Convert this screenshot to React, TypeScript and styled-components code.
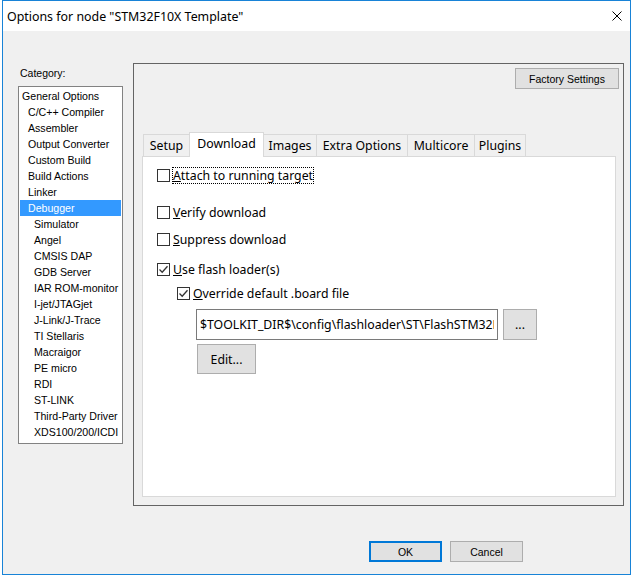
import React from "react";
import styled, { createGlobalStyle } from "styled-components";

const BIG = `"Noto Sans", "Liberation Sans", sans-serif`;
const SMALL = `"Liberation Sans", Arial, sans-serif`;

const GlobalStyle = createGlobalStyle`
  html, body {
    margin: 0;
    padding: 0;
    background: #ffffff;
  }
  body {
    width: 634px;
    height: 577px;
    overflow: hidden;
  }
`;

const Window = styled.div`
  margin-left: 2px;
  width: 629px;
  height: 575px;
  box-sizing: border-box;
  border: 1px solid #1883d7;
  background: #f0f0f0;
  display: flex;
  flex-direction: column;
  color: #000;
`;

const TitleBar = styled.div`
  flex: none;
  height: 30px;
  background: #ffffff;
  display: flex;
  align-items: center;
  padding: 0 8px 0 4px;
  font-family: ${BIG};
  font-size: 12.4px;
`;

const TitleText = styled.div`
  flex: 1;
  white-space: nowrap;
`;

const CloseIcon = styled.svg`
  width: 10px;
  height: 10px;
  display: block;
`;

const Body = styled.div`
  display: flex;
  gap: 10px;
  padding: 32px 6px 0 15px;
`;

const LeftColumn = styled.div`
  width: 105px;
  display: flex;
  flex-direction: column;
`;

const CategoryLabel = styled.div`
  height: 23px;
  box-sizing: border-box;
  padding: 4px 0 0 2px;
  font-family: ${SMALL};
  font-size: 10.5px;
  line-height: 13px;
`;

const TreeList = styled.div`
  height: 358px;
  box-sizing: border-box;
  border: 1px solid #828282;
  background: #ffffff;
  padding-top: 1px;
`;

const TreeRow = styled.div<{ $level: number; $selected?: boolean }>`
  height: 16px;
  line-height: 16px;
  margin: 0 1px;
  padding-left: ${(p) => 2 + p.$level * 6}px;
  font-family: ${SMALL};
  font-size: 10.6px;
  white-space: nowrap;
  background: ${(p) => (p.$selected ? "#3399ff" : "transparent")};
  color: ${(p) => (p.$selected ? "#ffffff" : "#000000")};
`;

const GroupBox = styled.div`
  width: 491px;
  height: 443px;
  box-sizing: border-box;
  border: 1px solid #646464;
  display: flex;
  flex-direction: column;
`;

const Button = styled.div<{ $w: number; $h: number; $small?: boolean; $default?: boolean }>`
  width: ${(p) => p.$w}px;
  height: ${(p) => p.$h}px;
  box-sizing: border-box;
  background: #e1e1e1;
  border: ${(p) => (p.$default ? "2px solid #0078d7" : "1px solid #adadad")};
  display: flex;
  align-items: center;
  justify-content: center;
  font-family: ${(p) => (p.$small ? SMALL : BIG)};
  font-size: ${(p) => (p.$small ? "10.5px" : "12.3px")};
  white-space: nowrap;
  flex: none;
`;

const FactoryButton = styled(Button)`
  align-self: flex-end;
  margin: 4px 4px 0 0;
`;

const TabStrip = styled.div`
  display: flex;
  align-items: flex-end;
  height: 24px;
  margin: 43px 0 0 8px;
  padding-left: 1px;
`;

const Tab = styled.div<{ $w: number; $active?: boolean }>`
  position: relative;
  width: ${(p) => p.$w}px;
  height: ${(p) => (p.$active ? 25 : 22)}px;
  box-sizing: border-box;
  margin-bottom: ${(p) => (p.$active ? -1 : 0)}px;
  padding-bottom: ${(p) => (p.$active ? 3 : 0)}px;
  z-index: ${(p) => (p.$active ? 1 : 0)};
  border: 1px solid #d9d9d9;
  border-bottom: none;
  background: ${(p) => (p.$active ? "#ffffff" : "#f0f0f0")};
  display: flex;
  align-items: center;
  justify-content: center;
  font-family: ${BIG};
  font-size: 12.3px;
  white-space: nowrap;

  & + & {
    margin-left: -1px;
  }
`;

const TabPanel = styled.div`
  flex: 1;
  margin: 0 7px 8px 8px;
  box-sizing: border-box;
  border: 1px solid #d9d9d9;
  background: #ffffff;
  padding: 10px 0 0 14px;
  display: flex;
  flex-direction: column;
  align-items: flex-start;
`;

const CheckRow = styled.div<{ $top: number; $indent?: number }>`
  display: flex;
  align-items: center;
  height: 17px;
  margin-top: ${(p) => p.$top}px;
  margin-left: ${(p) => p.$indent || 0}px;
`;

const Box = styled.span`
  width: 13px;
  height: 13px;
  box-sizing: border-box;
  border: 1px solid #333333;
  background: #ffffff;
  display: flex;
  align-items: center;
  justify-content: center;
`;

const CheckLabel = styled.span<{ $focused?: boolean }>`
  margin-left: 2px;
  border: 1px dotted ${(p) => (p.$focused ? "#000000" : "transparent")};
  font-family: ${BIG};
  font-size: 12.3px;
  line-height: 15px;
  white-space: nowrap;

  u {
    text-underline-offset: 1px;
  }
`;

const PathRow = styled.div`
  display: flex;
  gap: 5px;
  margin: 7px 0 0 39px;
`;

const PathInput = styled.input`
  width: 302px;
  height: 31px;
  box-sizing: border-box;
  border: 1px solid #7a7a7a;
  padding: 0 3px;
  margin: 0;
  background: #ffffff;
  font-family: ${BIG};
  font-size: 12.3px;
  color: #000;
  outline: none;
`;

const EditButton = styled(Button)`
  margin: 4px 0 0 40px;
`;

const Footer = styled.div`
  display: flex;
  justify-content: flex-end;
  gap: 8px;
  margin-top: 35px;
  padding-right: 107px;
`;

const tree: { label: string; level: number; selected?: boolean }[] = [
  { label: "General Options", level: 0 },
  { label: "C/C++ Compiler", level: 1 },
  { label: "Assembler", level: 1 },
  { label: "Output Converter", level: 1 },
  { label: "Custom Build", level: 1 },
  { label: "Build Actions", level: 1 },
  { label: "Linker", level: 1 },
  { label: "Debugger", level: 1, selected: true },
  { label: "Simulator", level: 2 },
  { label: "Angel", level: 2 },
  { label: "CMSIS DAP", level: 2 },
  { label: "GDB Server", level: 2 },
  { label: "IAR ROM-monitor", level: 2 },
  { label: "I-jet/JTAGjet", level: 2 },
  { label: "J-Link/J-Trace", level: 2 },
  { label: "TI Stellaris", level: 2 },
  { label: "Macraigor", level: 2 },
  { label: "PE micro", level: 2 },
  { label: "RDI", level: 2 },
  { label: "ST-LINK", level: 2 },
  { label: "Third-Party Driver", level: 2 },
  { label: "XDS100/200/ICDI", level: 2 },
];

const tabs = [
  { label: "Setup", w: 47 },
  { label: "Download", w: 75, active: true },
  { label: "Images", w: 54 },
  { label: "Extra Options", w: 92 },
  { label: "Multicore", w: 68 },
  { label: "Plugins", w: 52 },
];

function CheckMark() {
  return (
    <svg width="11" height="11" viewBox="0 0 11 11">
      <path d="M1.5 5.5 L4.2 8.2 L9.5 2.2" fill="none" stroke="#333" strokeWidth="1.3" />
    </svg>
  );
}

function CheckBox(props: {
  checked?: boolean;
  focused?: boolean;
  mnemonic: string;
  rest: string;
  top: number;
  indent?: number;
}) {
  return (
    <CheckRow $top={props.top} $indent={props.indent}>
      <Box>{props.checked && <CheckMark />}</Box>
      <CheckLabel $focused={props.focused}>
        <u>{props.mnemonic}</u>
        {props.rest}
      </CheckLabel>
    </CheckRow>
  );
}

export default function App() {
  return (
    <>
      <GlobalStyle />
      <Window>
        <TitleBar>
          <TitleText>Options for node "STM32F10X Template"</TitleText>
          <CloseIcon viewBox="0 0 10 10">
            <path d="M0.5 0.5 L9.5 9.5 M9.5 0.5 L0.5 9.5" stroke="#000" strokeWidth="1" />
          </CloseIcon>
        </TitleBar>
        <Body>
          <LeftColumn>
            <CategoryLabel>Category:</CategoryLabel>
            <TreeList>
              {tree.map((item) => (
                <TreeRow key={item.label} $level={item.level} $selected={item.selected}>
                  {item.label}
                </TreeRow>
              ))}
            </TreeList>
          </LeftColumn>
          <GroupBox>
            <FactoryButton $w={104} $h={21} $small>
              Factory Settings
            </FactoryButton>
            <TabStrip>
              {tabs.map((t) => (
                <Tab key={t.label} $w={t.w} $active={t.active}>
                  {t.label}
                </Tab>
              ))}
            </TabStrip>
            <TabPanel>
              <CheckBox focused mnemonic="A" rest="ttach to running target" top={0} />
              <CheckBox mnemonic="V" rest="erify download" top={20} />
              <CheckBox mnemonic="S" rest="uppress download" top={10} />
              <CheckBox checked mnemonic="U" rest="se flash loader(s)" top={13} />
              <CheckBox checked mnemonic="O" rest="verride default .board file" top={7} indent={20} />
              <PathRow>
                <PathInput
                  readOnly
                  defaultValue="$TOOLKIT_DIR$\config\flashloader\ST\FlashSTM32F10xx8.board"
                />
                <Button $w={34} $h={31}>
                  ...
                </Button>
              </PathRow>
              <EditButton $w={59} $h={30}>
                Edit...
              </EditButton>
            </TabPanel>
          </GroupBox>
        </Body>
        <Footer>
          <Button $w={73} $h={21} $small $default>
            OK
          </Button>
          <Button $w={73} $h={21} $small>
            Cancel
          </Button>
        </Footer>
      </Window>
    </>
  );
}
